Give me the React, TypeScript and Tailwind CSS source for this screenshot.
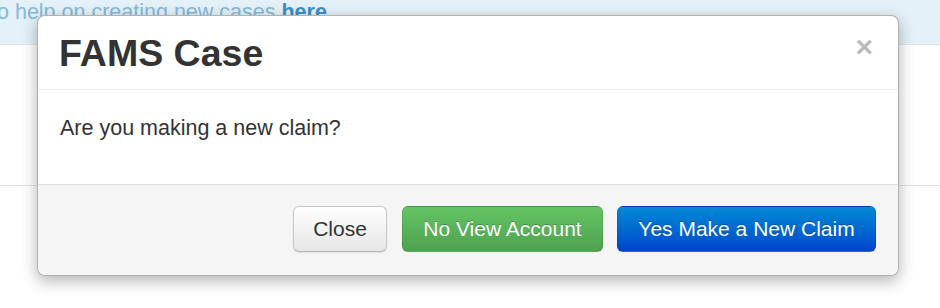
import React from "react";

export default function App() {
  return (
    <div className="relative w-[940px] h-[308px] overflow-hidden bg-white font-['Liberation_Sans',Arial,sans-serif]">
      {/* page behind the dialog */}
      <div className="h-[45px] bg-[#e5f1f8] border-b border-[#d6eaf4] overflow-hidden">
        <p className="-mt-[3px] -ml-[3px] text-[21.5px] leading-[31px] text-[#86b9da] whitespace-nowrap">
          o help on creating new cases <a className="font-bold text-[#3a90c6]">here</a>
        </p>
      </div>
      <div className="mt-[140px] border-t border-[#e2e2e2]" />

      {/* dialog */}
      <div className="absolute left-[37px] top-[15px] w-[862px] bg-white border border-black/30 rounded-[8px] shadow-[0_5px_16px_rgba(0,0,0,0.3)]">
        <div className="relative pl-[21px] pr-[23px] pt-[14px] pb-[13px] border-b border-[#eee]">
          <h3 className="text-[37.5px] leading-[46px] font-bold text-[#333]">FAMS Case</h3>
          <button className="absolute right-[25px] top-[16px] text-[30px] leading-[30px] font-bold text-[#bbb]">
            ×
          </button>
        </div>
        <div className="h-[94px] px-[22px] pt-[23px]">
          <p className="text-[21.5px] leading-[31px] text-[#333]">Are you making a new claim?</p>
        </div>
        <div className="flex justify-end pt-[21px] pb-[23px] pr-[22px] bg-[#f5f5f5] border-t border-[#ddd] rounded-b-[8px]">
          <button className="w-[94px] h-[46px] flex items-center justify-center rounded-[6px] border border-[#c8c8c8] border-b-[#b3b3b3] bg-gradient-to-b from-white to-[#e6e6e6] text-[21px] text-[#333] shadow-[inset_0_1px_0_rgba(255,255,255,0.2),0_1px_2px_rgba(0,0,0,0.08)]">
            Close
          </button>
          <button className="ml-[15px] w-[201px] h-[46px] flex items-center justify-center rounded-[6px] border border-black/10 bg-gradient-to-b from-[#64c464] to-[#4fa24f] text-[21px] text-white [text-shadow:0_-1px_0_rgba(0,0,0,0.25)]">
            No View Account
          </button>
          <button className="ml-[14px] w-[259px] h-[46px] flex items-center justify-center rounded-[6px] border border-black/10 bg-gradient-to-b from-[#0889d4] to-[#0044cc] text-[21px] text-white [text-shadow:0_-1px_0_rgba(0,0,0,0.25)]">
            Yes Make a New Claim
          </button>
        </div>
      </div>
    </div>
  );
}
